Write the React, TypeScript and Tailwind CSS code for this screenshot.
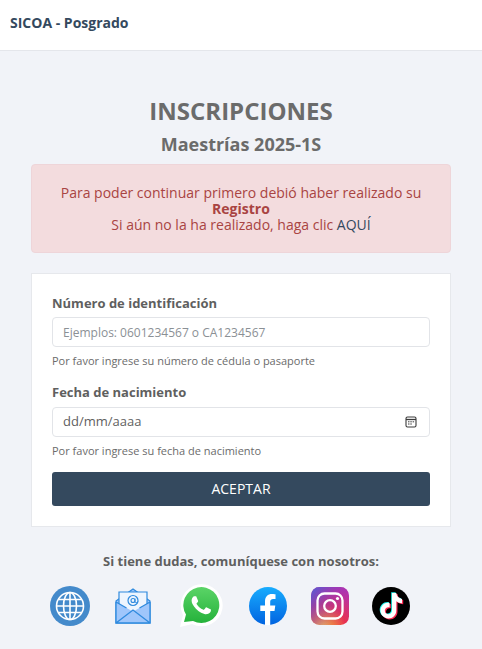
import React from 'react';

const GlobeIcon = () => (
  <svg width="40" height="40" viewBox="0 0 40 40" fill="none">
    <circle cx="20" cy="20" r="20" fill="#448acb" />
    <g stroke="#fff" strokeWidth="1.6">
      <circle cx="20" cy="20" r="13.5" />
      <ellipse cx="20" cy="20" rx="6.5" ry="13.5" />
      <path d="M20 6.5v27M6.500 20h27M8.500 13.500h23M8.500 26.500h23" />
    </g>
  </svg>
);

const MailIcon = () => (
  <svg width="36" height="36" viewBox="0 0 36 36" fill="none">
    <path d="M1 13 18 1l17 12v22H1z" fill="#9fc6fb" stroke="#2f8ade" strokeWidth="1.200" />
    <path d="M4 4h28v16l-14 7-14-7z" fill="#eef5fe" stroke="#2f8ade" strokeWidth="1.200" />
    <circle cx="18" cy="12.500" r="5" stroke="#2f8ade" strokeWidth="1.200" />
    <circle cx="18" cy="12.500" r="2" stroke="#2f8ade" strokeWidth="1.100" />
    <path d="M20 10.500v3c0 1.500 2.500 1.500 3 0" stroke="#2f8ade" strokeWidth="1" />
    <path d="M1 14l15 8.500h4L35 14v21H1z" fill="#9fc6fb" />
    <path d="M1 14l10.500 6M35 14l-10.500 6M1 35l17-13 17 13M1 14v21h34V14" stroke="#2f8ade" strokeWidth="1.300" />
  </svg>
);

const WhatsappIcon = () => (
  <svg width="44" height="43" viewBox="0 0 44 43">
    <defs>
      <linearGradient id="wa" x1="0" y1="0" x2="0" y2="1">
        <stop offset="0" stopColor="#5bd467" />
        <stop offset="1" stopColor="#25b23b" />
      </linearGradient>
    </defs>
    <path d="M1 43 4 31A21 21 0 1 1 13 40z" fill="#fff" />
    <path d="M5 38 7 30.500A18 18 0 1 1 14 37z" fill="url(#wa)" />
    <path
      transform="translate(3 2) scale(1.600)"
      fill="#fff"
      d="M17.472 14.382c-.297-.149-1.758-.867-2.030-.967-.273-.099-.471-.148-.670.150-.197.297-.767.966-.940 1.164-.173.199-.347.223-.644.075-.297-.150-1.255-.463-2.390-1.475-.883-.788-1.480-1.761-1.653-2.059-.173-.297-.018-.458.130-.606.134-.133.298-.347.446-.520.149-.174.198-.298.298-.497.099-.198.050-.371-.025-.520-.075-.149-.669-1.612-.916-2.207-.242-.579-.487-.500-.669-.510-.173-.008-.371-.010-.570-.010-.198 0-.520.074-.792.372-.272.297-1.040 1.016-1.040 2.479 0 1.462 1.065 2.875 1.213 3.074.149.198 2.096 3.200 5.077 4.487.709.306 1.262.489 1.694.625.712.227 1.360.195 1.871.118.571-.085 1.758-.719 2.006-1.413.248-.694.248-1.289.173-1.413-.074-.124-.272-.198-.570-.347z"
    />
  </svg>
);

const FacebookIcon = () => (
  <svg width="38" height="38" viewBox="0 0 38 38">
    <defs>
      <linearGradient id="fb" x1="0" y1="0" x2="0" y2="1">
        <stop offset="0" stopColor="#18acfe" />
        <stop offset="1" stopColor="#0163e0" />
      </linearGradient>
    </defs>
    <circle cx="19" cy="19" r="19" fill="url(#fb)" />
    <path
      d="M16 38V24h-4.700v-5.500H16v-4.200c0-4.700 2.800-7.300 7-7.300 2 0 3.500.3 3.500.3v4.600h-2.300c-2.300 0-3 1.400-3 2.900v3.700h5.100l-.8 5.500h-4.300v14z"
      fill="#fff"
    />
  </svg>
);

const InstagramIcon = () => (
  <svg width="38" height="38" viewBox="0 0 38 38" fill="none">
    <defs>
      <radialGradient id="ig1" cx="0.3" cy="1.050" r="1.100">
        <stop offset="0" stopColor="#fdd74e" />
        <stop offset="0.250" stopColor="#fb8a2e" />
        <stop offset="0.550" stopColor="#e8304f" />
        <stop offset="1" stopColor="#c02fa6" />
      </radialGradient>
      <linearGradient id="ig2" x1="0" y1="0" x2="1" y2="0.800">
        <stop offset="0" stopColor="#4f5fd5" />
        <stop offset="0.500" stopColor="#8d3bc0" stopOpacity="0.500" />
        <stop offset="1" stopColor="#b02fb0" stopOpacity="0" />
      </linearGradient>
    </defs>
    <rect width="38" height="38" rx="8.500" fill="url(#ig1)" />
    <rect width="38" height="38" rx="8.500" fill="url(#ig2)" />
    <rect x="6.500" y="6.500" width="25" height="25" rx="7" stroke="#fff" strokeWidth="2.300" />
    <circle cx="19" cy="19" r="5.800" stroke="#fff" strokeWidth="2.300" />
    <circle cx="26.500" cy="11.500" r="1.600" fill="#fff" />
  </svg>
);

const TiktokIcon = () => {
  const note =
    'M20 6h4.300c.3 3.300 2.500 5.600 5.700 6v4.200c-2.200 0-4.100-.7-5.700-1.900v9.200c0 4.600-3.600 8-7.900 8-4.400 0-7.900-3.500-7.900-7.900 0-4.700 4.200-8.400 9.100-7.700v4.400c-2.600-.7-4.800 1.100-4.800 3.400 0 2 1.600 3.600 3.600 3.600 2 0 3.600-1.600 3.600-3.800z';
  return (
    <svg width="38" height="38" viewBox="0 0 38 38">
      <circle cx="19" cy="19" r="19" fill="#000" />
      <path d={note} fill="#25f4ee" transform="translate(-.8 -.8)" />
      <path d={note} fill="#fe2c55" transform="translate(1.200 1)" />
      <path d={note} fill="#fff" />
    </svg>
  );
};

const CalendarIcon = () => (
  <svg width="12" height="12" viewBox="0 0 12 12" fill="none" stroke="#3a3a3a">
    <rect x="1" y="1" width="10" height="10" rx="1.500" strokeWidth="1.100" />
    <path d="M1 3.500h10" strokeWidth="1.300" />
    <path d="M3 5.800h1.500M5.300 5.800h1.500M7.600 5.800h1.500M3 8h1.500M5.300 8h1.500" strokeWidth="1" />
  </svg>
);

interface FieldProps {
  label: string;
  help: string;
  inputGap: string;
  children: React.ReactNode;
}

const Field = ({ label, help, inputGap, children }: FieldProps) => (
  <div>
    <label className="block text-[13px] leading-[18px] font-bold text-[#5f5f5f]">{label}</label>
    <div className={inputGap}>{children}</div>
    <p className="mt-[5px] text-[11px] leading-[17px] text-[#6b6b6b]">{help}</p>
  </div>
);

export default function App() {
  return (
    <div className="min-h-[649px] overflow-hidden bg-[#f1f3f8] font-['Open_Sans',sans-serif]">
      <header className="flex h-[51px] items-center border-b border-[#e4e6eb] bg-white px-2.5 pb-1">
        <span className="text-sm font-bold text-[#34495e]">SICOA - Posgrado</span>
      </header>

      <main className="px-[31px]">
        <h1 className="mt-[43px] text-center text-2xl leading-[33px] font-bold text-[#6b6b6b]">INSCRIPCIONES</h1>
        <h2 className="mt-[5px] text-center text-lg leading-[25px] font-bold text-[#6b6b6b]">Maestrías 2025-1S</h2>

        <div className="mt-[7px] h-[89px] rounded border border-[#eed5d9] bg-[#f3dcde] px-4 pt-[20px] text-center text-sm leading-4 text-[#a94442]">
          <p>Para poder continuar primero debió haber realizado su</p>
          <p className="font-bold">Registro</p>
          <p>
            Si aún no la ha realizado, haga clic <a className="text-[#34495e]">AQUÍ</a>
          </p>
        </div>

        <form className="mt-5 flex h-[254px] flex-col border border-[#e6e8ec] bg-white px-5 pt-5">
          <Field
            label="Número de identificación"
            help="Por favor ingrese su número de cédula o pasaporte"
            inputGap="mt-[5px]"
          >
            <input
              readOnly
              placeholder="Ejemplos: 0601234567 o CA1234567"
              className="h-[30px] w-full rounded border border-[#e2e4e8] bg-white px-2.5 text-xs text-[#6c757d] outline-none placeholder:text-[#8b9095]"
            />
          </Field>
          <div className="mt-[14px]">
            <Field
              label="Fecha de nacimiento"
              help="Por favor ingrese su fecha de nacimiento"
              inputGap="mt-[6px]"
            >
              <div className="flex h-[30px] items-center justify-between rounded border border-[#e2e4e8] pr-3 pl-2.5 text-[13px] text-[#5f5f5f]">
                <span>dd/mm/aaaa</span>
                <CalendarIcon />
              </div>
            </Field>
          </div>
          <button type="button" className="mt-[13px] h-[34px] w-full rounded-[3px] bg-[#34495e] text-sm text-white">
            ACEPTAR
          </button>
        </form>

        <p className="mt-[25px] text-center text-[13px] leading-[18px] font-bold text-[#5f5f5f]">
          Si tiene dudas, comuníquese con nosotros:
        </p>

        <div className="mt-[14px] flex items-center pl-[19px]">
          <GlobeIcon />
          <div className="ml-[25px]">
            <MailIcon />
          </div>
          <div className="ml-[28px]">
            <WhatsappIcon />
          </div>
          <div className="ml-[26px]">
            <FacebookIcon />
          </div>
          <div className="ml-[24px]">
            <InstagramIcon />
          </div>
          <div className="ml-[23px]">
            <TiktokIcon />
          </div>
        </div>
      </main>
    </div>
  );
}
